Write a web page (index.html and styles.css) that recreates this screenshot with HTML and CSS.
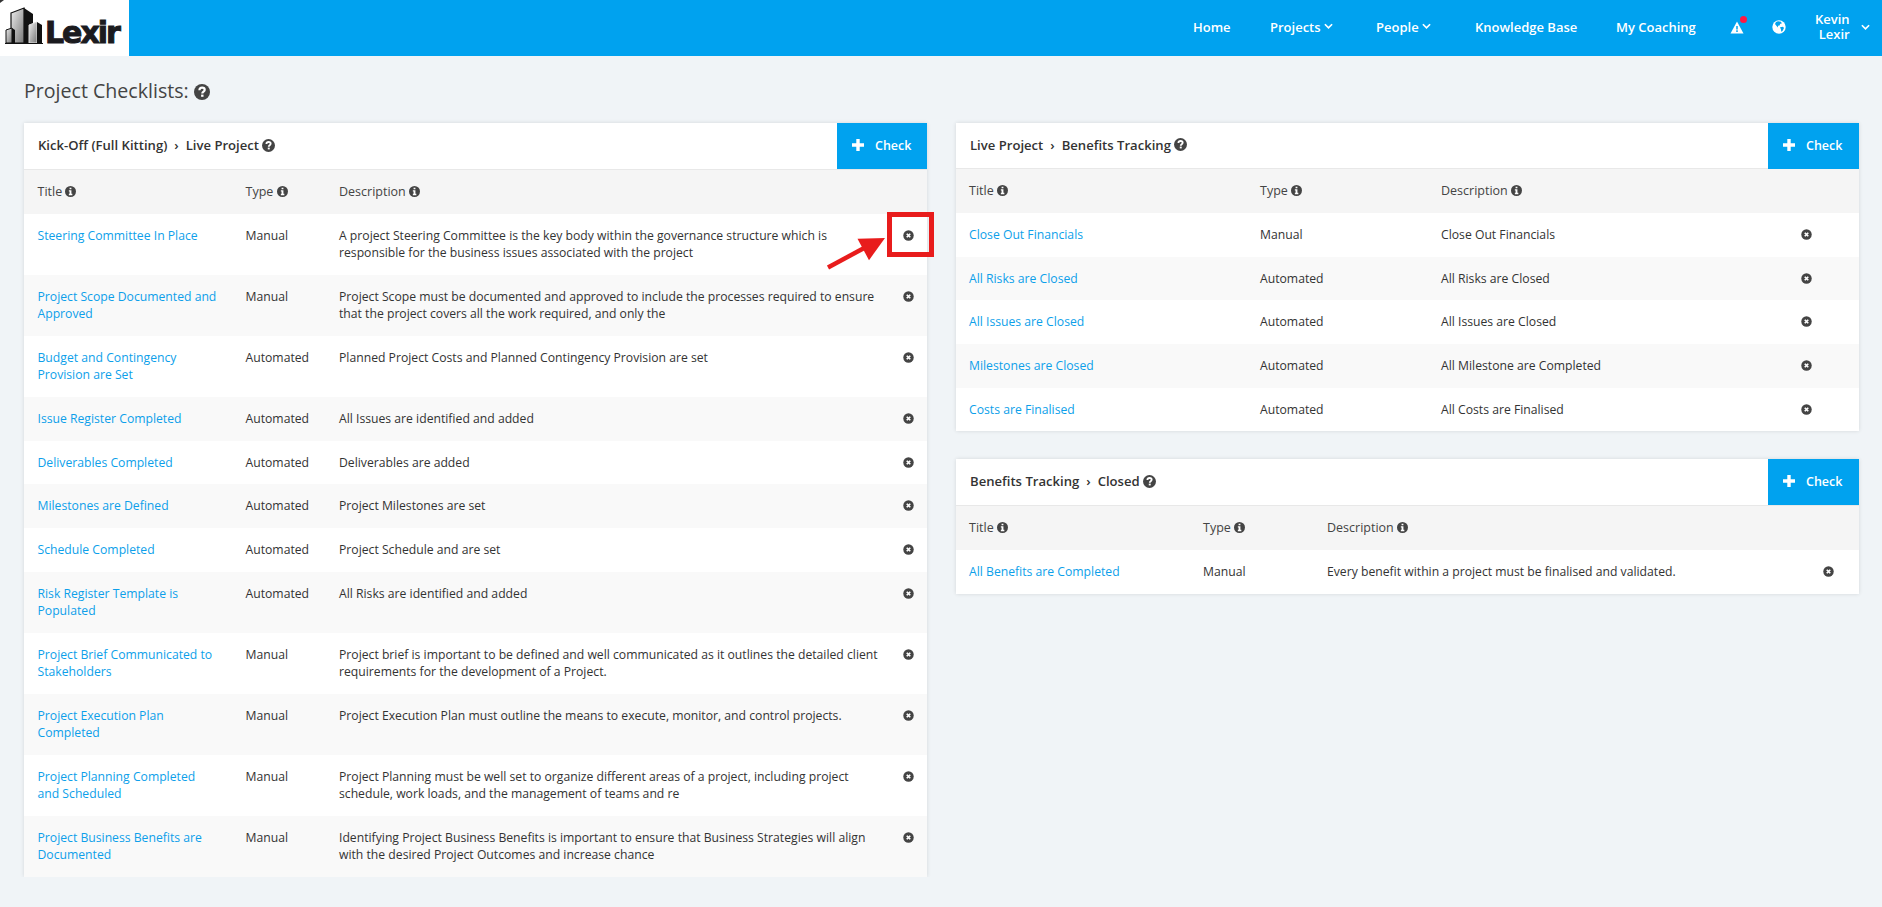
FILE: index.html
```html
<!DOCTYPE html>
<html lang="en">
  <head>
    <meta charset="utf-8">
    <title>Project Checklists</title>
    <link rel="stylesheet" href="styles.css">
  </head>
  <body>
    <!-- shared icons -->
    <svg class="sprite" width="0" height="0">
      <symbol id="help" viewBox="0 0 16 16">
        <circle cx="8" cy="8" r="8" fill="#444"/>
        <path d="M5.400 6.200C5.500 4.500 6.600 3.700 8.100 3.700c1.500 0 2.600 0.900 2.600 2.200 0 1.700-2.400 1.700-2.400 3.500" fill="none" stroke="#fff" stroke-width="2.200"/>
        <rect x="7.100" y="10.600" width="2.400" height="2.200" fill="#fff"/>
      </symbol>
      <symbol id="info" viewBox="0 0 12 12">
        <circle cx="6" cy="6" r="6" fill="#444"/>
        <path d="M5 2h2v1.600H5zM4.200 4.600H7V8.400h1V10H4.200V8.400H5V6.100h-.8z" fill="#fff"/>
      </symbol>
      <symbol id="remove" viewBox="0 0 12 12">
        <circle cx="6" cy="6" r="5.700" fill="#444"/>
        <path d="M4.100 4.100l3.800 3.800M7.900 4.100L4.100 7.900" stroke="#fff" stroke-width="1.900"/>
      </symbol>
      <symbol id="plus" viewBox="0 0 12 12">
        <path d="M6 0v12M0 6h12" stroke="#fff" stroke-width="3.400"/>
      </symbol>
      <symbol id="down" viewBox="0 0 8 6">
        <path d="M.8 1L4 4.200 7.200 1" fill="none" stroke="#fff" stroke-width="1.500"/>
      </symbol>
    </svg>

    <div class="navbar">
      <div class="logo">
        <svg width="45" height="56" viewBox="0 0 45 56">
          <defs>
            <linearGradient id="steel" x1="0" y1="0" x2="1" y2="1">
              <stop offset="0" stop-color="#eee"/>
              <stop offset="1" stop-color="#777"/>
            </linearGradient>
          </defs>
          <path d="M0 0h4L0 3z" fill="#333"/>
          <path d="M11 13l13-5v35H11z" fill="url(#steel)" stroke="#111" stroke-width="1.200"/>
          <path d="M24 8l9 6v29h-9z" fill="#111"/>
          <path d="M6 30l6-2v15H6z" fill="url(#steel)" stroke="#111"/>
          <path d="M12 28l3 2v13h-3z" fill="#111"/>
          <path d="M29 25l8-3v21h-8z" fill="url(#steel)" stroke="#ddd"/>
          <path d="M37 22l5 3v18h-5z" fill="#111"/>
          <path d="M5 43.500h38" stroke="#111"/>
        </svg>
        <span class="logo-text">Lexir</span>
      </div>
      <div class="menu">
        <a class="item home">Home</a>
        <a class="item projects">Projects <svg class="down"><use href="#down"/></svg></a>
        <a class="item people">People <svg class="down"><use href="#down"/></svg></a>
        <a class="item knowledge">Knowledge Base</a>
        <a class="item coaching">My Coaching</a>
        <a class="item alerts">
          <svg width="14" height="13" viewBox="0 0 14 13">
            <path d="M7 0.500l6.500 12H0.500z" fill="#fff"/>
            <path d="M7 5v3.400M7 9.300v1.600" stroke="#00a2ef" stroke-width="1.500"/>
          </svg>
          <span class="dot"></span>
        </a>
        <a class="item globe">
          <svg width="14" height="14" viewBox="0 0 14 14">
            <circle cx="7" cy="7" r="6.700" fill="#fff"/>
            <path d="M4 2l2-.8 3 .6 .8 1.600-1.500.4L7.500 5.500 6 5.800 5.800 7.500 4.200 5.500 3 4zM8 7.200l3-.4 1 1.200-1.500 3-1.300.8-.2-2.300z" fill="#00a2ef"/>
          </svg>
        </a>
        <a class="item user"><span>Kevin<br>Lexir</span><svg class="down"><use href="#down"/></svg></a>
      </div>
    </div>

    <h1 class="page-title">Project Checklists: <svg class="help-lg"><use href="#help"/></svg></h1>

    <div class="columns">
      <div class="card kickoff">
        <div class="card-head">
          <h2><span>Kick-Off (Full Kitting)</span><span class="sep">›</span><span>Live Project</span><svg class="help"><use href="#help"/></svg></h2>
          <button class="check"><svg class="plus"><use href="#plus"/></svg>Check</button>
        </div>
        <table>
          <colgroup><col class="c-title"><col class="c-type"><col class="c-desc"><col></colgroup>
          <thead>
            <tr><th>Title <svg class="info"><use href="#info"/></svg></th><th>Type <svg class="info"><use href="#info"/></svg></th><th>Description <svg class="info"><use href="#info"/></svg></th><th></th></tr>
          </thead>
          <tbody>
            <tr><td><a>Steering Committee In Place</a></td><td>Manual</td><td>A project Steering Committee is the key body within the governance structure which is<br>responsible for the business issues associated with the project</td><td class="act"><svg class="remove"><use href="#remove"/></svg></td></tr>
            <tr><td><a>Project Scope Documented and<br>Approved</a></td><td>Manual</td><td>Project Scope must be documented and approved to include the processes required to ensure<br>that the project covers all the work required, and only the</td><td class="act"><svg class="remove"><use href="#remove"/></svg></td></tr>
            <tr><td><a>Budget and Contingency<br>Provision are Set</a></td><td>Automated</td><td>Planned Project Costs and Planned Contingency Provision are set</td><td class="act"><svg class="remove"><use href="#remove"/></svg></td></tr>
            <tr><td><a>Issue Register Completed</a></td><td>Automated</td><td>All Issues are identified and added</td><td class="act"><svg class="remove"><use href="#remove"/></svg></td></tr>
            <tr><td><a>Deliverables Completed</a></td><td>Automated</td><td>Deliverables are added</td><td class="act"><svg class="remove"><use href="#remove"/></svg></td></tr>
            <tr><td><a>Milestones are Defined</a></td><td>Automated</td><td>Project Milestones are set</td><td class="act"><svg class="remove"><use href="#remove"/></svg></td></tr>
            <tr><td><a>Schedule Completed</a></td><td>Automated</td><td>Project Schedule and are set</td><td class="act"><svg class="remove"><use href="#remove"/></svg></td></tr>
            <tr><td><a>Risk Register Template is<br>Populated</a></td><td>Automated</td><td>All Risks are identified and added</td><td class="act"><svg class="remove"><use href="#remove"/></svg></td></tr>
            <tr><td><a>Project Brief Communicated to<br>Stakeholders</a></td><td>Manual</td><td>Project brief is important to be defined and well communicated as it outlines the detailed client<br>requirements for the development of a Project.</td><td class="act"><svg class="remove"><use href="#remove"/></svg></td></tr>
            <tr><td><a>Project Execution Plan<br>Completed</a></td><td>Manual</td><td>Project Execution Plan must outline the means to execute, monitor, and control projects.</td><td class="act"><svg class="remove"><use href="#remove"/></svg></td></tr>
            <tr><td><a>Project Planning Completed<br>and Scheduled</a></td><td>Manual</td><td>Project Planning must be well set to organize different areas of a project, including project<br>schedule, work loads, and the management of teams and re</td><td class="act"><svg class="remove"><use href="#remove"/></svg></td></tr>
            <tr><td><a>Project Business Benefits are<br>Documented</a></td><td>Manual</td><td>Identifying Project Business Benefits is important to ensure that Business Strategies will align<br>with the desired Project Outcomes and increase chance</td><td class="act"><svg class="remove"><use href="#remove"/></svg></td></tr>
          </tbody>
        </table>
        <!-- callout on the first remove icon -->
        <svg class="callout" width="110" height="62" viewBox="0 0 110 62">
          <rect x="64.500" y="4.500" width="42" height="40" fill="none" stroke="#e81c1c" stroke-width="5"/>
          <path d="M3 57.500L41 37" stroke="#e81c1c" stroke-width="4.500"/>
          <path d="M60 28L32.500 28.800l11.500 21.400z" fill="#e81c1c"/>
        </svg>
      </div>

      <div class="side">
        <div class="card live">
          <div class="card-head">
            <h2><span>Live Project</span><span class="sep">›</span><span>Benefits Tracking</span><svg class="help"><use href="#help"/></svg></h2>
            <button class="check"><svg class="plus"><use href="#plus"/></svg>Check</button>
          </div>
          <table>
            <colgroup><col class="c-title"><col class="c-type"><col class="c-desc"><col></colgroup>
            <thead>
              <tr><th>Title <svg class="info"><use href="#info"/></svg></th><th>Type <svg class="info"><use href="#info"/></svg></th><th>Description <svg class="info"><use href="#info"/></svg></th><th></th></tr>
            </thead>
            <tbody>
              <tr><td><a>Close Out Financials</a></td><td>Manual</td><td>Close Out Financials</td><td class="act"><svg class="remove"><use href="#remove"/></svg></td></tr>
              <tr><td><a>All Risks are Closed</a></td><td>Automated</td><td>All Risks are Closed</td><td class="act"><svg class="remove"><use href="#remove"/></svg></td></tr>
              <tr><td><a>All Issues are Closed</a></td><td>Automated</td><td>All Issues are Closed</td><td class="act"><svg class="remove"><use href="#remove"/></svg></td></tr>
              <tr><td><a>Milestones are Closed</a></td><td>Automated</td><td>All Milestone are Completed</td><td class="act"><svg class="remove"><use href="#remove"/></svg></td></tr>
              <tr><td><a>Costs are Finalised</a></td><td>Automated</td><td>All Costs are Finalised</td><td class="act"><svg class="remove"><use href="#remove"/></svg></td></tr>
            </tbody>
          </table>
        </div>

        <div class="card benefits">
          <div class="card-head">
            <h2><span>Benefits Tracking</span><span class="sep">›</span><span>Closed</span><svg class="help"><use href="#help"/></svg></h2>
            <button class="check"><svg class="plus"><use href="#plus"/></svg>Check</button>
          </div>
          <table>
            <colgroup><col class="c-title"><col class="c-type"><col class="c-desc"><col></colgroup>
            <thead>
              <tr><th>Title <svg class="info"><use href="#info"/></svg></th><th>Type <svg class="info"><use href="#info"/></svg></th><th>Description <svg class="info"><use href="#info"/></svg></th><th></th></tr>
            </thead>
            <tbody>
              <tr><td><a>All Benefits are Completed</a></td><td>Manual</td><td>Every benefit within a project must be finalised and validated.</td><td class="act"><svg class="remove"><use href="#remove"/></svg></td></tr>
            </tbody>
          </table>
        </div>
      </div>
    </div>
  </body>
</html>
```
FILE: styles.css
```css
* {
  box-sizing: border-box;
}
body {
  margin: 0;
  background-color: #f0f4f7;
  font-family: "Open Sans", sans-serif;
  font-size: 12.190px;
  color: #333;
}
.sprite {
  display: block;
}

/* top bar */
.navbar {
  height: 56px;
  background-color: #00a2ef;
  display: flex;
  justify-content: space-between;
}
.logo {
  width: 129px;
  height: 56px;
  background-color: white;
  display: flex;
}
.logo-text {
  padding-top: 14px;
  font-family: "DejaVu Sans", sans-serif;
  font-weight: bold;
  font-size: 30px;
  line-height: 38px;
  letter-spacing: -2px;
  color: #1b1b1f;
  -webkit-text-stroke: 1px #1b1b1f;
}
.menu {
  display: flex;
  align-items: center;
  padding-bottom: 2px;
  color: white;
  font-size: 13px;
  font-weight: 600;
  line-height: 15px;
}
.item {
  white-space: nowrap;
  flex: none;
}
.home {
  width: 77px;
}
.projects {
  width: 106px;
}
.people {
  width: 99px;
}
.knowledge {
  width: 141px;
}
.coaching {
  width: 114px;
}
.down {
  width: 9px;
  height: 7px;
  vertical-align: 2px;
}
.alerts {
  width: 42px;
  position: relative;
}
.alerts svg,
.globe svg {
  display: block;
}
.dot {
  position: absolute;
  top: -5px;
  left: 10px;
  width: 7px;
  height: 7px;
  border-radius: 50%;
  background-color: #ff1744;
}
.globe {
  width: 43px;
}
.user {
  width: 67px;
  display: flex;
  align-items: center;
  text-align: right;
}
.user .down {
  margin-left: 11px;
}

.page-title {
  margin: 0;
  height: 67px;
  padding: 22px 0 0 24px;
  font-size: 19.600px;
  font-weight: 500;
  line-height: 26px;
  color: #444;
}
.help-lg {
  width: 16px;
  height: 16px;
  vertical-align: -2px;
}

/* cards */
.columns {
  display: flex;
  align-items: flex-start;
  padding-left: 24px;
  gap: 29px;
}
.card {
  background-color: white;
  box-shadow: 0 0 4px rgba(0, 0, 0, 0.12);
}
.kickoff {
  width: 903px;
  position: relative;
}
.side {
  width: 903px;
}
.live {
  margin-bottom: 28px;
}
.card-head {
  height: 47px;
  display: flex;
  justify-content: space-between;
  border-bottom: 1px solid #e8e8e8;
}
.live .card-head {
  height: 46px;
}
.card-head h2 {
  margin: 0;
  padding: 0 0 2px 14px;
  display: flex;
  align-items: center;
  font-size: 13.100px;
  font-weight: 600;
}
.sep {
  margin: 0 7px;
}
.help {
  width: 13px;
  height: 13px;
  margin-left: 3px;
}
.check {
  width: 91px;
  height: 46px;
  padding: 0 0 1px 15px;
  border: none;
  background-color: #00a2ef;
  color: white;
  display: flex;
  align-items: center;
  font-family: inherit;
  font-size: 12.500px;
  font-weight: 600;
}
.kickoff .check {
  width: 90px;
}
.plus {
  width: 12px;
  height: 12px;
  margin: -2px 11px 0 0;
}

table {
  width: 100%;
  table-layout: fixed;
  border-collapse: collapse;
}
th,
td {
  padding: 13px 0 13.300px 13.500px;
  text-align: left;
  vertical-align: top;
  line-height: 17.370px;
  white-space: nowrap;
}
th {
  height: 44px;
  background-color: #f5f5f5;
  font-size: 12.500px;
  font-weight: 500;
  color: #444;
}
tbody tr:nth-child(even) {
  background-color: #f9f9f9;
}
td a {
  color: #0d9fea;
}
.info {
  width: 11px;
  height: 11px;
  vertical-align: -1px;
}
.remove {
  width: 11px;
  height: 11px;
  vertical-align: -1px;
}
.kickoff .c-title {
  width: 208px;
}
.kickoff .c-type {
  width: 93.500px;
}
.kickoff .c-desc {
  width: 564px;
}
.live .c-title {
  width: 291px;
}
.live .c-type {
  width: 181px;
}
.live .c-desc {
  width: 360px;
}
.benefits .c-title {
  width: 234px;
}
.benefits .c-type {
  width: 124px;
}
.benefits .c-desc {
  width: 496px;
}
.side td,
.side th {
  padding-left: 13px;
}

.callout {
  position: absolute;
  left: 801px;
  top: 87px;
}
```
